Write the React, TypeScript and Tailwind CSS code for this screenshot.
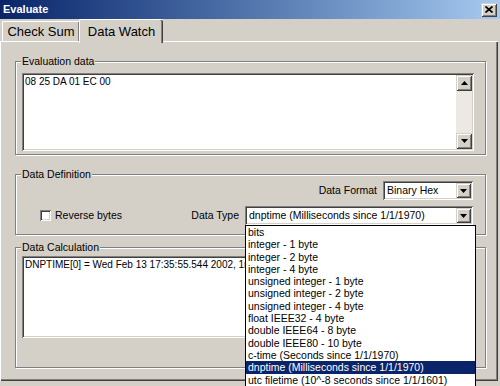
import React from "react";

// classic win2000 bevels
const raisedBtn =
  "shadow-[inset_1px_1px_#d4d0c8,inset_-1px_-1px_#404040,inset_2px_2px_#ffffff,inset_-2px_-2px_#808080]";
const sunken =
  "shadow-[inset_1px_1px_#808080,inset_-1px_-1px_#ffffff,inset_2px_2px_#404040,inset_-2px_-2px_#d4d0c8]";

const dataTypes = [
  "bits",
  "integer - 1 byte",
  "integer - 2 byte",
  "integer - 4 byte",
  "unsigned integer - 1 byte",
  "unsigned integer - 2 byte",
  "unsigned integer - 4 byte",
  "float IEEE32 - 4 byte",
  "double IEEE64 - 8 byte",
  "double IEEE80 - 10 byte",
  "c-time (Seconds since 1/1/1970)",
  "dnptime (Milliseconds since 1/1/1970)",
  "utc filetime (10^-8 seconds since 1/1/1601)",
];

function Arrow({ up = false }: { up?: boolean }) {
  return (
    <svg width="7" height="4" viewBox="0 0 7 4">
      <path d={up ? "M0 4h7L3.5 0z" : "M0 0h7L3.5 4z"} fill="#000" />
    </svg>
  );
}

function Group({
  label,
  className,
  children,
}: {
  label: string;
  className: string;
  children?: React.ReactNode;
}) {
  return (
    <div
      className={`relative border border-[#808080] shadow-[inset_1px_1px_#ffffff,1px_1px_#ffffff] ${className}`}
    >
      <span className="absolute -top-[7px] left-[5px] bg-[#d4d0c8] px-[1px] text-[10.5px] leading-[12px] text-black">
        {label}
      </span>
      {children}
    </div>
  );
}

function Combo({ value, className }: { value: string; className: string }) {
  return (
    <div className={`flex h-[19px] bg-white p-[2px] ${sunken} ${className}`}>
      <span className="flex-1 truncate pl-[2px] text-[10.5px] leading-[15px] text-black">
        {value}
      </span>
      <span
        className={`flex w-[15px] items-center justify-center bg-[#d4d0c8] ${raisedBtn}`}
      >
        <Arrow />
      </span>
    </div>
  );
}

export default function App() {
  return (
    <div
      className="relative h-[386px] w-[500px] overflow-hidden bg-[#d4d0c8] text-black"
      style={{ fontFamily: '"Liberation Sans", Arial, sans-serif' }}
    >
      {/* title bar */}
      <div className="flex h-[19px] items-center justify-between bg-gradient-to-r from-[#0a246a] to-[#a6caf0] pl-[3px] pr-[3px]">
        <span className="text-[11px] font-bold leading-[19px] text-white">Evaluate</span>
        <span
          className={`flex h-[14px] w-[16px] items-center justify-center bg-[#d4d0c8] ${raisedBtn}`}
        >
          <svg width="8" height="7" viewBox="0 0 8 7">
            <path d="M0.5 0.5L7.5 6.5M7.5 0.5L0.5 6.5" stroke="#000" strokeWidth="1.7" />
          </svg>
        </span>
      </div>

      {/* tabs */}
      <div className="flex h-[22px] items-end pl-[2px]">
        <div className="flex h-[20px] w-[77px] items-center justify-center rounded-tl-[2px] border-l border-t border-white shadow-[inset_-1px_0_#808080] text-[13px]">
          Check Sum
        </div>
        <div className="relative z-10 -mb-[2px] flex h-[24px] w-[84px] items-start justify-center rounded-t-[2px] border-l border-t border-white bg-[#d4d0c8] pt-[2px] shadow-[inset_-1px_0_#404040,inset_-2px_0_#808080] text-[13px]">
          Data Watch
        </div>
      </div>

      {/* tab page */}
      <div className="h-[340px] w-[498px] pl-[15px] pt-[20px] shadow-[inset_1px_1px_#ffffff,inset_-1px_-1px_#404040,inset_-2px_-2px_#808080]">
        <Group label="Evaluation data" className="h-[94px] w-[471px]">
          <div className={`ml-[6px] mt-[11px] flex h-[78px] w-[452px] bg-white p-[2px] ${sunken}`}>
            <div className="flex-1 pl-[1px] pt-[1px] text-[10px] leading-[12px]">
              08 25 DA 01 EC 00
            </div>
            <div className="flex w-[16px] flex-col bg-[#ece9e5]">
              <span
                className={`flex h-[16px] items-center justify-center bg-[#d4d0c8] ${raisedBtn}`}
              >
                <Arrow up />
              </span>
              <span className="flex-1" />
              <span
                className={`flex h-[16px] items-center justify-center bg-[#d4d0c8] ${raisedBtn}`}
              >
                <Arrow />
              </span>
            </div>
          </div>
        </Group>

        <Group label="Data Definition" className="mt-[19px] h-[61px] w-[471px]">
          <div className="flex items-center justify-end gap-[6px] pr-[12px] pt-[6px]">
            <span className="text-[10.5px]">Data Format</span>
            <Combo value="Binary Hex" className="w-[90px]" />
          </div>
          <div className="mt-[6px] flex items-center pl-[24px] pr-[12px]">
            <span className={`h-[11px] w-[11px] bg-white ${sunken}`} />
            <span className="ml-[4px] text-[10.5px]">Reverse bytes</span>
            <span className="ml-auto mr-[6px] text-[10.5px]">Data Type</span>
            <Combo value="dnptime (Milliseconds since 1/1/1970)" className="w-[228px]" />
          </div>
        </Group>

        <Group label="Data Calculation" className="mt-[12px] h-[121px] w-[471px]">
          <div className={`ml-[6px] mt-[8px] h-[82px] w-[452px] bg-white p-[2px] ${sunken}`}>
            <div className="whitespace-nowrap pl-[1px] pt-[1px] text-[10px] leading-[12px]">
              DNPTIME[0] = Wed Feb 13 17:35:55.544 2002, 1ms
            </div>
          </div>
        </Group>
      </div>

      {/* open drop-down list of Data Type */}
      <div className="absolute left-[245px] top-[225px] z-20 w-[231px] border border-black bg-white">
        {dataTypes.map((t) => (
          <div
            key={t}
            className={`h-[12.3px] whitespace-nowrap pl-[2px] text-[10.5px] leading-[12.3px] ${
              t.startsWith("dnptime") ? "bg-[#0a246a] text-white" : "text-black"
            }`}
          >
            {t}
          </div>
        ))}
      </div>
    </div>
  );
}
